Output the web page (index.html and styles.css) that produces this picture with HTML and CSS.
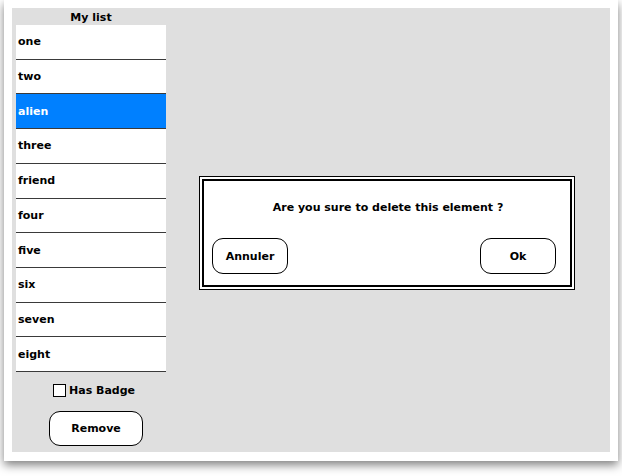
FILE: index.html
```html
<!DOCTYPE html>
<html>
<head>
<meta charset="utf-8">
<link rel="stylesheet" href="styles.css">
</head>
<body>
<div class="frame">
  <div class="panel">
    <div class="sidebar">
      <div class="title">My list</div>
      <div class="list">
        <div class="row">one</div>
        <div class="row">two</div>
        <div class="row selected">alien</div>
        <div class="row">three</div>
        <div class="row">friend</div>
        <div class="row">four</div>
        <div class="row">five</div>
        <div class="row">six</div>
        <div class="row">seven</div>
        <div class="row">eight</div>
      </div>
      <label class="check"><span class="box"></span>Has Badge</label>
      <div class="btn remove">Remove</div>
    </div>
    <div class="main">
      <div class="dialog">
        <div class="dialog-inner">
          <div class="message">Are you sure to delete this element ?</div>
          <div class="actions">
            <div class="btn dbtn">Annuler</div>
            <div class="btn dbtn">Ok</div>
          </div>
        </div>
      </div>
    </div>
  </div>
</div>
</body>
</html>
```

FILE: styles.css
```css
html, body {
  margin: 0;
  padding: 0;
  background: #fff;
}
body {
  font-family: "DejaVu Sans", sans-serif;
  font-weight: bold;
  font-size: 11px;
  color: #000;
  overflow: hidden;
  height: 476px;
}
.frame {
  box-sizing: border-box;
  margin-left: 4px;
  width: 614px;
  height: 461px;
  padding: 8px 8px 9px 8px;
  background: #fff;
  box-shadow: 0 4px 9px rgba(0, 0, 0, 0.5);
}
.panel {
  height: 444px;
  background: #dfdfdf;
  display: flex;
}
.sidebar {
  width: 158px;
  padding-left: 4px;
  box-sizing: border-box;
  display: flex;
  flex-direction: column;
}
.title {
  width: 150px;
  height: 17px;
  line-height: 19px;
  text-align: center;
}
.list {
  width: 150px;
  height: 347px;
  background: #fff;
  display: grid;
  grid-template-rows: repeat(10, 1fr);
}
.row {
  border-bottom: 1px solid #3a3a3a;
  display: flex;
  align-items: center;
  padding-left: 2px;
}
.row.selected {
  background: #0080ff;
  color: #fff;
}
.check {
  display: flex;
  align-items: center;
  margin-top: 12px;
  margin-left: 37px;
  height: 13px;
}
.box {
  width: 11px;
  height: 11px;
  border: 1px solid #000;
  background: #fff;
  margin-right: 3px;
}
.btn {
  box-sizing: border-box;
  border: 1px solid #000;
  border-radius: 11px;
  background: #fff;
  display: flex;
  align-items: center;
  justify-content: center;
}
.remove {
  margin-top: 14px;
  margin-left: 33px;
  width: 94px;
  height: 35px;
}
.main {
  flex: 1;
  padding-left: 29px;
  padding-top: 168px;
}
.dialog {
  width: 376px;
  box-sizing: border-box;
  border: 1px solid #000;
  padding: 2px;
  background: #fff;
}
.dialog-inner {
  border: 2px solid #000;
  padding: 16px 14px 11px 8px;
}
.message {
  text-align: center;
  height: 22px;
  line-height: 22px;
  margin-left: 8px;
}
.actions {
  display: flex;
  justify-content: space-between;
  margin-top: 19px;
}
.dbtn {
  width: 76px;
  height: 36px;
}
```
